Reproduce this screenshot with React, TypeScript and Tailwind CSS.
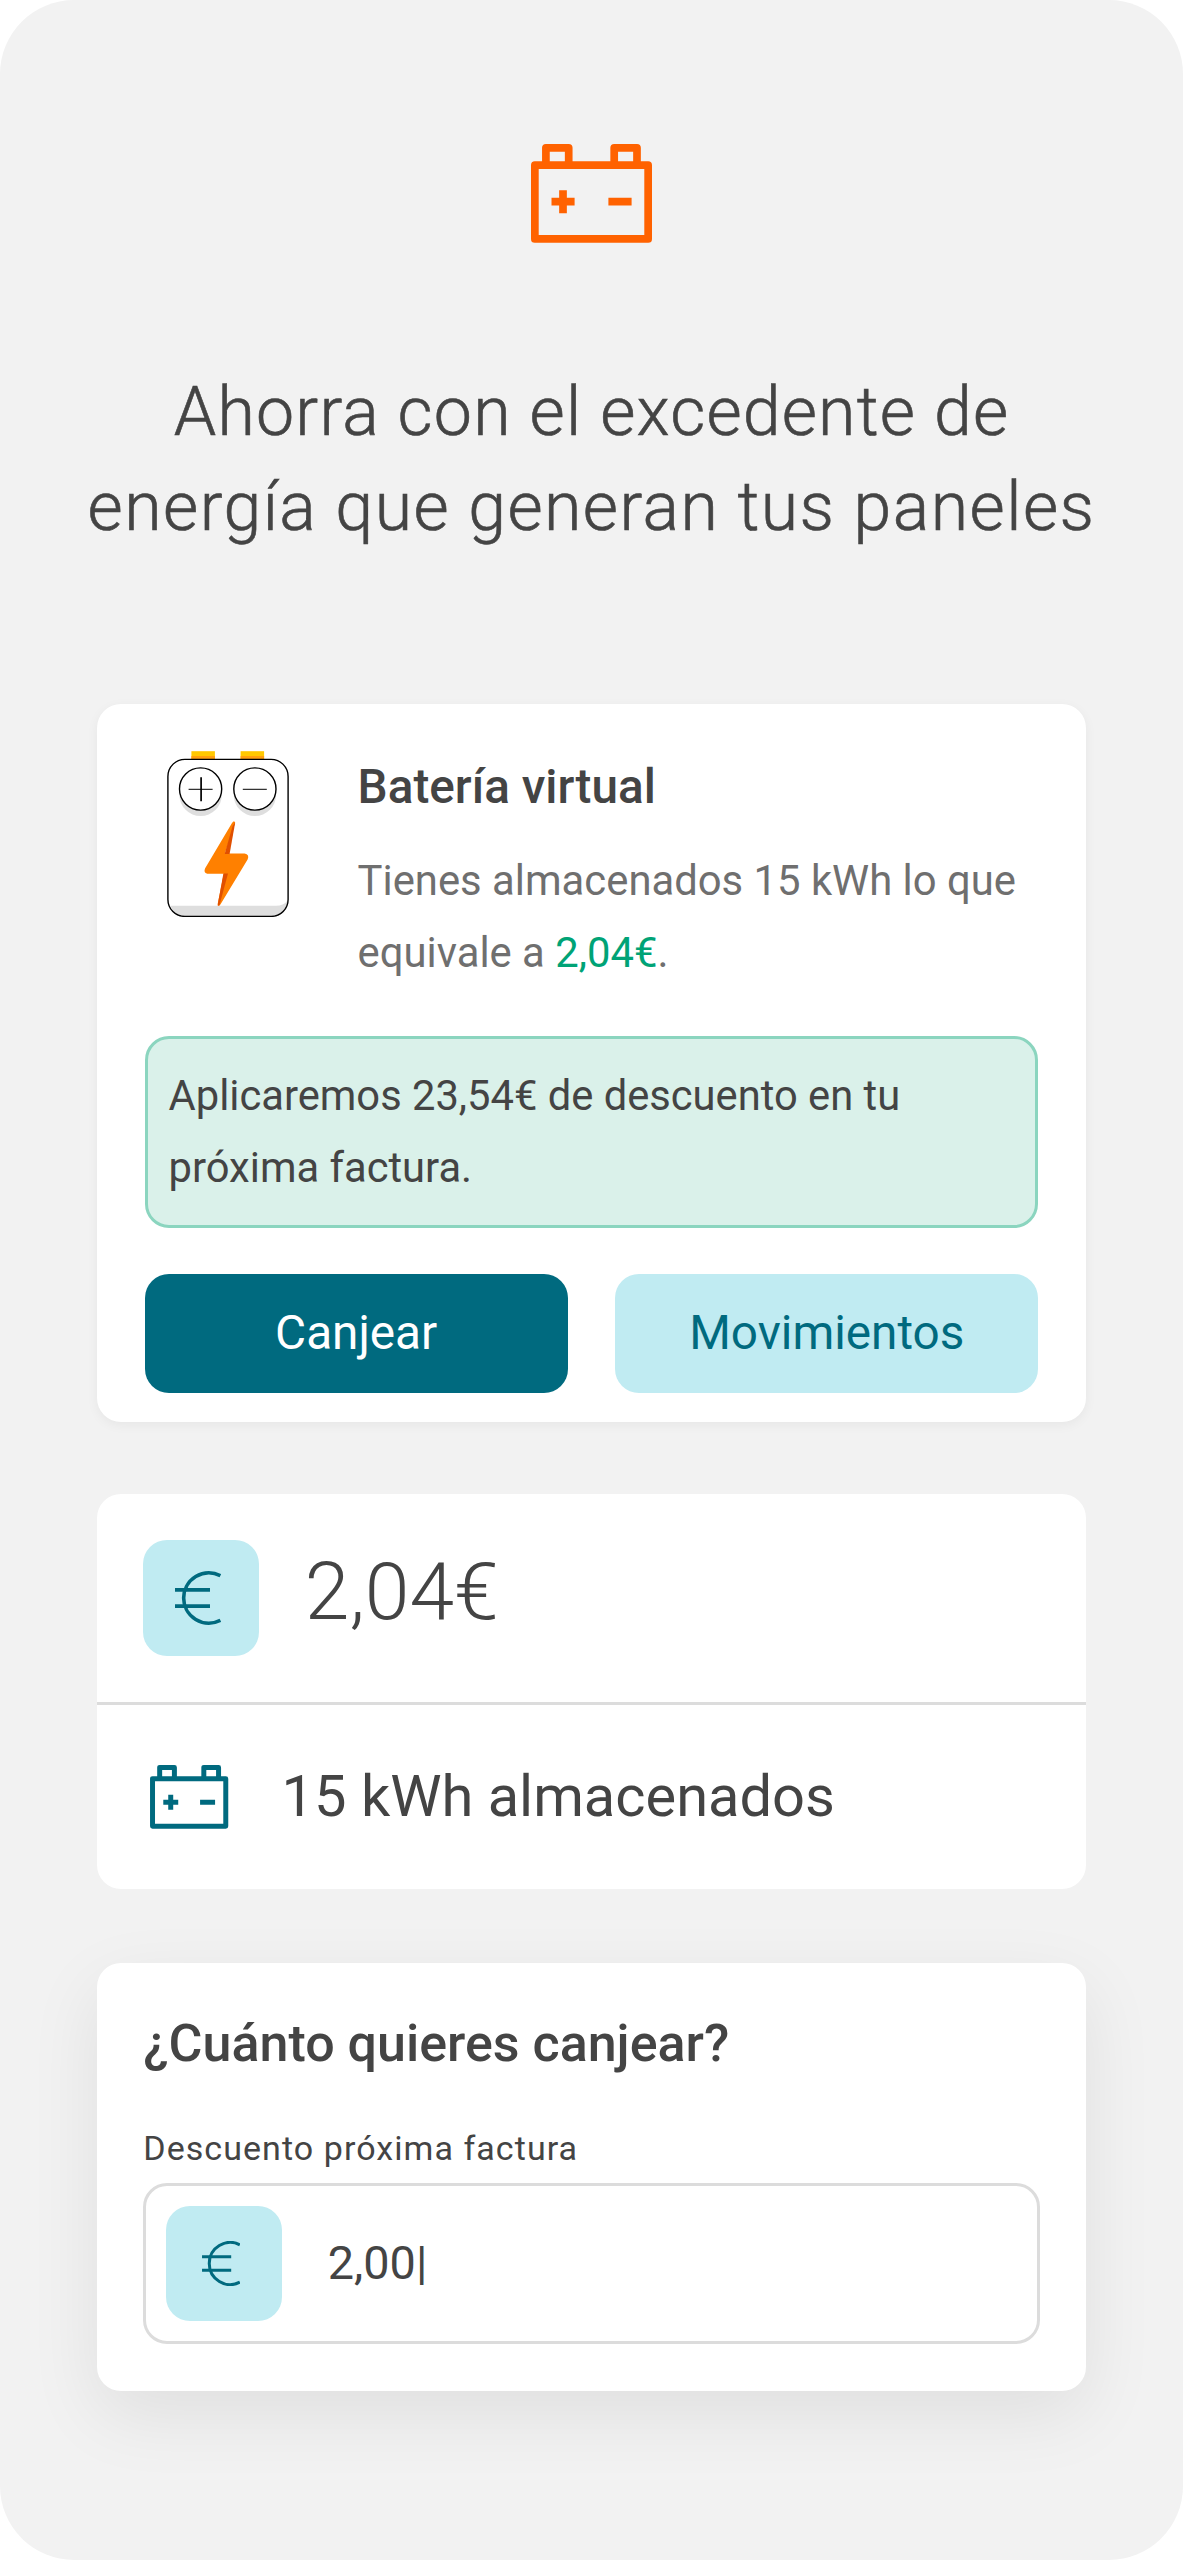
import React from 'react';

function BatteryIcon({ className }: { className: string }) {
  return (
    <svg viewBox="0 0 121 99" fill="none" stroke="currentColor" strokeWidth="7.7" strokeLinejoin="round" className={className}>
      <rect x="3.85" y="21.1" width="113.3" height="73.8" />
      <path d="M14.9 21.1V3.85H37.7V21.1M83.2 21.1V3.85H106V21.1" />
      <path d="M20.5 57.7H43.6M32 46.2V69.2M77.4 57.7H100.6" />
    </svg>
  );
}

function EuroIcon({ className }: { className: string }) {
  return (
    <svg viewBox="0 0 46 54" fill="none" stroke="currentColor" strokeWidth="3.6" className={className}>
      <path d="M45.4 4.6A25.2 25.2 0 1 0 45.4 49.4" />
      <path d="M0 18.9H35M0 35.1H35" />
    </svg>
  );
}

function BatteryPicture() {
  return (
    <svg viewBox="0 0 122 166" className="ml-[22px] h-[166px] w-[122px]">
      <rect x="24.4" y="0.2" width="23.5" height="8" fill="#ffc800" />
      <rect x="73.6" y="0.2" width="23.5" height="8" fill="#ffc800" />
      <rect x="24.4" y="5" width="23.5" height="3" fill="#ff9f0f" />
      <rect x="73.6" y="5" width="23.5" height="3" fill="#ff9f0f" />
      <rect x="0.9" y="8.4" width="120.2" height="157" rx="17" fill="#fff" />
      <path d="M3.4 154.8H109Q116.5 154.8 120.8 149.4Q120 165.4 104.1 165.4H17.9Q7.5 165.4 3.4 154.8Z" fill="#dedede" />
      <rect x="0.9" y="8.4" width="120.2" height="157" rx="17" fill="none" stroke="#000" strokeWidth="1.4" />
      <circle cx="33.6" cy="43.8" r="21.2" fill="#dedede" />
      <circle cx="87.9" cy="43.8" r="21.2" fill="#dedede" />
      <g fill="#fff" stroke="#000" strokeWidth="1.4">
        <circle cx="33.6" cy="38" r="21.1" />
        <circle cx="87.9" cy="38" r="21.1" />
      </g>
      <path d="M21.6 38.4H45.6M75.8 38.4H99.8" stroke="#333" strokeWidth="1.4" />
      <path d="M34.1 26.3V50.3" stroke="#000" strokeWidth="1.7" />
      <path
        d="M66.3 70.6Q68.6 70 68 72.4L57.8 102.6H77.6Q82.8 103.6 80.6 108.4L53.4 153.6Q50.8 156.6 50.7 152.8L56.8 122.8H40.2Q36.4 121.6 38 117.4L65 72Z"
        fill="#ff8000"
      />
      <path d="M68.2 71.5L62.6 102.9H57.6L65.6 75Z" fill="#e04f00" />
      <path d="M56.4 122.6H61L52.4 154.4L50.6 154.6Z" fill="#e04f00" />
    </svg>
  );
}

export default function App() {
  return (
    <div className="h-[2560px] w-[1183px] rounded-[74px] bg-[#f2f2f2] px-[97px] pt-36 font-['Roboto',sans-serif] text-[#444]">
      <BatteryIcon className="mx-auto h-[99px] w-[121px] text-[#ff6200]" />

      <h1 className="-mx-10 mt-[122px] text-center text-[68px] leading-[95px] font-light whitespace-nowrap [-webkit-text-stroke:0.6px_#444]">
        <span className="block tracking-[1.2px]">Ahorra con el excedente de</span>
        <span className="block tracking-[1.47px]">energía que generan tus paneles</span>
      </h1>

      <section className="mt-[149px] h-[718px] rounded-3xl bg-white px-[47.6px] pt-[46.8px] shadow-[0_3px_12px_rgba(0,0,0,0.05)]">
        <div className="flex h-[285.2px]">
          <BatteryPicture />
          <div className="ml-[69px] pt-[8.5px]">
            <h2 className="text-[47.7px] leading-[56px] font-medium">Batería virtual</h2>
            <p className="mt-[30px] text-[41.8px] leading-[71.8px] whitespace-nowrap text-[#6f6f6f]">
              Tienes almacenados 15 kWh lo que
              <br />
              equivale a <span className="text-[#00a376]">2,04€</span>.
            </p>
          </div>
        </div>
        <p className="h-[192px] rounded-3xl border-[3px] border-[#8bd5bf] bg-[#daf1ea] px-[21px] pt-[21px] text-[41.7px] leading-[71.6px] whitespace-nowrap">
          Aplicaremos 23,54€ de descuento en tu
          <br />
          próxima factura.
        </p>
        <div className="mt-[46px] grid grid-cols-2 gap-[47.5px] text-[47.7px]">
          <button className="h-[119px] rounded-3xl bg-[#006a7f] text-white">Canjear</button>
          <button className="h-[119px] rounded-3xl bg-[#c0ebf2] text-[#006a7f]">Movimientos</button>
        </div>
      </section>

      <section className="mt-[72px] h-[395px] rounded-3xl bg-white">
        <div className="flex h-[211px] items-center border-b-[3px] border-[#dcdcdc] pl-[46.3px]">
          <div className="flex h-[115.5px] w-[115.5px] items-center rounded-3xl bg-[#c0ebf2] pl-[31.7px] text-[#006a7f]">
            <EuroIcon className="h-[54px] w-[46px]" />
          </div>
          <span className="-mt-3 ml-[46px] text-[80.4px] leading-none font-light">2,04€</span>
        </div>
        <div className="flex h-[184px] items-center pl-[53.3px]">
          <BatteryIcon className="h-16 w-[78.3px] text-[#006a7f]" />
          <span className="ml-[53px] text-[57.8px] leading-none">15 kWh almacenados</span>
        </div>
      </section>

      <section className="mt-[74px] h-[427.5px] rounded-3xl bg-white px-[46.3px] pt-[51px] shadow-[0_24px_72px_rgba(0,0,0,0.08)]">
        <h2 className="text-[52px] leading-[60px] font-medium">¿Cuánto quieres canjear?</h2>
        <p className="mt-[54px] text-[34px] leading-10 tracking-[1.06px]">Descuento próxima factura</p>
        <div className="mt-[15px] flex h-[161px] items-center rounded-3xl border-[3px] border-[#dcdcdc] pl-5">
          <div className="flex h-[115.5px] w-[115.5px] items-center rounded-3xl bg-[#c0ebf2] pl-[35.8px] text-[#006a7f]">
            <EuroIcon className="h-[45px] w-[38.4px]" />
          </div>
          <span className="ml-[46px] text-[46.8px] leading-none">2,00|</span>
        </div>
      </section>
    </div>
  );
}
